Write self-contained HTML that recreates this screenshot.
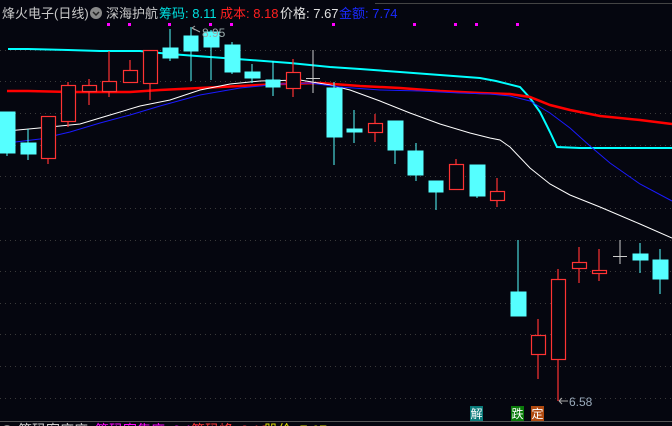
<!DOCTYPE html>
<html><head><meta charset="utf-8"><style>
html,body{margin:0;padding:0;background:#05060f;}
body{width:672px;height:426px;overflow:hidden;position:relative;font-family:"Liberation Sans","Noto Sans CJK SC",sans-serif;}
.h{position:absolute;top:3px;font-size:13px;white-space:nowrap;}
</style></head><body>
<svg width="672" height="426" style="position:absolute;left:0;top:0" xmlns="http://www.w3.org/2000/svg">
<line x1="375" y1="3.5" x2="672" y2="3.5" stroke="#444" stroke-width="1"/>
<g stroke="#3a3a3a" stroke-width="1" stroke-dasharray="1,4">
<line x1="0" y1="50.5" x2="672" y2="50.5"/><line x1="0" y1="81.5" x2="672" y2="81.5"/>
<line x1="0" y1="113.5" x2="672" y2="113.5"/><line x1="0" y1="145.5" x2="672" y2="145.5"/>
<line x1="0" y1="176.5" x2="672" y2="176.5"/><line x1="0" y1="208.5" x2="672" y2="208.5"/>
<line x1="0" y1="240.5" x2="672" y2="240.5"/><line x1="0" y1="271.5" x2="672" y2="271.5"/>
<line x1="0" y1="303.5" x2="672" y2="303.5"/><line x1="0" y1="334.5" x2="672" y2="334.5"/>
<line x1="0" y1="366.5" x2="672" y2="366.5"/><line x1="0" y1="398.5" x2="672" y2="398.5"/>
</g>
<line x1="0" y1="421.5" x2="672" y2="421.5" stroke="#555"/>
<g fill="#ff00ff">
<rect x="107" y="23" width="3" height="3"/><rect x="128" y="23" width="3" height="3"/><rect x="168" y="23" width="3" height="3"/><rect x="209" y="23" width="3" height="3"/><rect x="230" y="23" width="3" height="3"/><rect x="332" y="23" width="3" height="3"/><rect x="413" y="23" width="3" height="3"/><rect x="454" y="23" width="3" height="3"/><rect x="475" y="23" width="3" height="3"/><rect x="516" y="23" width="3" height="3"/>
</g>
<polyline fill="none" stroke="#00ffff" stroke-width="2" points="8,49 28,49 68,50 100,51 140,51 170,54 210,57 250,60 290,63 330,67 360,69 400,72 440,75 480,78 496,81 520,87 530,98 540,112 550,132 557,147 580,148 672,148"/>
<polyline fill="none" stroke="#ff0000" stroke-width="2.5" points="7,91 28,91 70,92 130,92 160,90 200,88 240,86 280,84 320,83 360,86 400,88 440,91 480,93 510,94 530,97 550,105 570,110 600,116 640,120 672,124"/>
<polyline fill="none" stroke="#ffffff" stroke-width="1" points="7,131 50,127 80,124 110,115 140,106 170,100 200,90 230,84 260,81 300,80 330,85 350,90 380,101 410,113 440,124 470,133 490,138 500,140 510,147 530,168 550,184 570,195 600,207 640,224 672,238"/>
<polyline fill="none" stroke="#1a1aff" stroke-width="1" points="7,143 40,139 70,132 100,123 130,115 160,106 200,95 240,88 280,84 310,83 340,87 380,90 420,91 460,93 490,94 510,96 530,101 550,113 570,128 590,146 610,163 640,184 672,201"/>
<g fill="#55ffff" stroke="#55ffff">
<line x1="7" y1="112" x2="7" y2="156"/><rect x="0" y="112" width="15" height="41"/>
<line x1="28" y1="129" x2="28" y2="160"/><rect x="21" y="143" width="15" height="11"/>
<line x1="170" y1="29" x2="170" y2="61"/><rect x="163" y="48" width="15" height="10"/>
<line x1="191" y1="27" x2="191" y2="81"/><rect x="184" y="36" width="14" height="15"/>
<line x1="211" y1="30" x2="211" y2="80"/><rect x="204" y="32" width="15" height="15"/>
<line x1="232" y1="42" x2="232" y2="74"/><rect x="225" y="45" width="15" height="27"/>
<line x1="252" y1="64" x2="252" y2="83"/><rect x="245" y="72" width="15" height="6"/>
<line x1="273" y1="61" x2="273" y2="96"/><rect x="266" y="80" width="14" height="7"/>
<line x1="334" y1="82" x2="334" y2="165"/><rect x="327" y="88" width="15" height="49"/>
<line x1="354" y1="110" x2="354" y2="143"/><rect x="347" y="129" width="15" height="3"/>
<line x1="395" y1="121" x2="395" y2="164"/><rect x="388" y="121" width="15" height="29"/>
<line x1="416" y1="143" x2="416" y2="181"/><rect x="408" y="151" width="15" height="24"/>
<line x1="436" y1="181" x2="436" y2="210"/><rect x="429" y="181" width="14" height="11"/>
<line x1="477" y1="165" x2="477" y2="198"/><rect x="470" y="165" width="15" height="31"/>
<line x1="518" y1="240" x2="518" y2="316"/><rect x="511" y="292" width="15" height="24"/>
<line x1="640" y1="243" x2="640" y2="273"/><rect x="633" y="254" width="15" height="6"/>
<line x1="660" y1="249" x2="660" y2="294"/><rect x="653" y="260" width="15" height="19"/>
</g>
<g fill="#05060f" stroke="#ff3333" stroke-width="1.2">
<line x1="48" y1="158" x2="48" y2="164"/><rect x="41.5" y="116.5" width="14" height="42"/>
<line x1="68" y1="82" x2="68" y2="127"/><rect x="61.5" y="85.5" width="14" height="36"/>
<line x1="89" y1="79" x2="89" y2="105"/><rect x="82.5" y="85.5" width="14" height="6"/>
<line x1="109" y1="51" x2="109" y2="97"/><rect x="102.5" y="81.5" width="14" height="10"/>
<line x1="130" y1="60" x2="130" y2="83"/><rect x="123.5" y="70.5" width="14" height="12"/>
<line x1="150" y1="83" x2="150" y2="100"/><rect x="143.5" y="50.5" width="14" height="33"/>
<line x1="293" y1="59" x2="293" y2="97"/><rect x="286.5" y="72.5" width="14" height="16"/>
<line x1="375" y1="114" x2="375" y2="142"/><rect x="368.5" y="123.5" width="14" height="9"/>
<line x1="456" y1="159" x2="456" y2="164"/><rect x="449.5" y="164.5" width="14" height="25"/>
<line x1="497" y1="178" x2="497" y2="207"/><rect x="490.5" y="191.5" width="14" height="9"/>
<line x1="538" y1="319" x2="538" y2="379"/><rect x="531.5" y="335.5" width="14" height="19"/>
<line x1="558" y1="269" x2="558" y2="401"/><rect x="551.5" y="279.5" width="14" height="80"/>
<line x1="579" y1="247" x2="579" y2="283"/><rect x="572.5" y="262.5" width="14" height="6"/>
<line x1="599" y1="249" x2="599" y2="281"/><rect x="592.5" y="270.5" width="14" height="3"/>
</g>
<g stroke="#cccccc" stroke-width="1">
<line x1="313" y1="50" x2="313" y2="93"/><line x1="306" y1="78.5" x2="320" y2="78.5"/>
<line x1="620" y1="240" x2="620" y2="264"/><line x1="613" y1="256.5" x2="627" y2="256.5"/>
</g>
<g stroke="#aaaaaa" fill="none" stroke-width="1">
<path d="M192,28 L200,32 M192,28 L195,26 M192,28 L195,30"/>
<path d="M559,401 L568,401 M559,401 L562,398 M559,401 L562,404"/>
</g>
<text x="202" y="37" fill="#9aa" font-size="12" font-family="Liberation Sans">8.95</text>
<text x="569" y="406" fill="#9ab" font-size="12" font-family="Liberation Sans">6.58</text>
<rect x="470" y="406" width="13" height="15" fill="#0a7a7a"/>
<rect x="511" y="406" width="13" height="15" fill="#0a7a0a"/>
<rect x="531" y="406" width="13" height="15" fill="#b04a10"/>
<g fill="#ffffff" font-size="12" font-family="Noto Sans CJK SC">
<text x="470.5" y="418">解</text><text x="511.5" y="418">跌</text><text x="531.5" y="418">定</text>
</g>
<circle cx="96" cy="13" r="6" fill="#888"/>
<path d="M93,12 L96,15 L99,12" stroke="#222" stroke-width="1.5" fill="none"/>
<circle cx="7" cy="430" r="5" fill="#888"/>
<g font-size="14" font-family="Liberation Sans, Noto Sans CJK SC, sans-serif">
<text x="18" y="435" fill="#ccc">筹码密度度</text>
<text x="95" y="435" fill="#ff00ff">筹码密集度: 0.16</text>
<text x="191" y="435" fill="#ff3333">筹码峰: 8.18</text>
<text x="264" y="435" fill="#dddd00">股价: 7.67</text>
</g>
</svg>
<div class="h" style="left:2px;color:#c8c8c8">烽火电子(日线)</div>
<div class="h" style="left:106px;color:#c8c8c8">深海护航</div>
<div class="h" style="left:159px;color:#00e0e0">筹码: 8.11</div>
<div class="h" style="left:220px;color:#ff2020">成本: 8.18</div>
<div class="h" style="left:280px;color:#e0e0e0">价格: 7.67</div>
<div class="h" style="left:339px;color:#1a2aff">金额: 7.74</div>
</body></html>
